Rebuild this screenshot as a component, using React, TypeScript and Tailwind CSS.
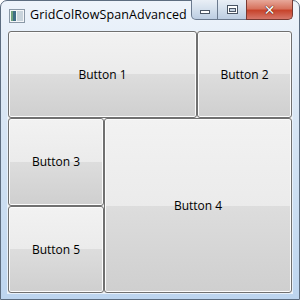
import React from "react";

const btn =
  "flex items-center justify-center rounded-[3px] border border-[#707070] text-[12px] text-black bg-[linear-gradient(to_bottom,#f2f2f2_0%,#ebebeb_50%,#dddddd_50%,#cfcfcf_100%)] shadow-[inset_0_0_0_1px_#fcfcfc]";

export default function App() {
  return (
    <div
      className="w-[300px] h-[300px] bg-white"
      style={{ fontFamily: '"Segoe UI", "Open Sans", "Noto Sans", sans-serif' }}
    >
      <div className="w-[300px] h-[300px] flex flex-col rounded-t-[7px] border border-[#5d6d80] bg-[linear-gradient(to_bottom,#eef4fb_0%,#dce8f5_30%,#bdd5ef_100%)] relative">
        <div className="h-[29px] flex items-start pl-[8px] pt-[6px] shrink-0">
          <svg width="16" height="14" viewBox="0 0 16 14" className="mt-[2px]">
            <rect x="0.5" y="0.5" width="15" height="13" fill="#f4f6f8" stroke="#8a98a6" />
            <rect x="2" y="2" width="5" height="10" fill="#3f6e86" />
            <rect x="8" y="2" width="6" height="10" fill="#c9d4dc" />
            <rect x="2" y="2" width="2" height="10" fill="#6fa27c" />
          </svg>
          <span className="ml-[5px] text-[12.5px] tracking-[0.1px] leading-[16px] text-black">GridColRowSpanAdvanced</span>
        </div>
        <div className="absolute top-[-1px] right-[6px] flex h-[20px]">
          <div className="w-[27px] h-[20px] flex items-center justify-center border border-[#6b7a8e] border-t-0 rounded-bl-[5px] bg-[linear-gradient(to_bottom,#e9eff6_0%,#d3dfec_50%,#bccde2_100%)]">
            <div className="w-[10px] h-[4px] bg-white border border-[#4a5564] mt-[4px]" />
          </div>
          <div className="w-[28px] h-[20px] flex items-center justify-center border-b border-[#6b7a8e] bg-[linear-gradient(to_bottom,#e9eff6_0%,#d3dfec_50%,#bccde2_100%)]">
            <div className="w-[11px] h-[9px] border border-[#4a5564] bg-white flex items-center justify-center">
              <div className="w-[7px] h-[4px] border border-[#4a5564] bg-[#c8d4e2]" />
            </div>
          </div>
          <div className="w-[47px] h-[20px] flex items-center justify-center border border-[#7a3a32] border-t-0 rounded-br-[5px] bg-[linear-gradient(to_bottom,#e7a89a_0%,#d7735e_45%,#c7442c_55%,#d6776a_100%)]">
            <span className="text-white font-bold text-[14px] leading-none" style={{ fontFamily: '"DejaVu Sans", sans-serif', textShadow: "0 0 1px #3a0a00, 0 0 1px #3a0a00" }}>✕</span>
          </div>
        </div>
        <div className="flex-1 px-[6px] pb-[6px]">
          <div className="border border-[#e8f1fb] w-[286px] h-[264px]">
            <div className="w-[284px] h-[262px] bg-[#f0f0f0] grid grid-cols-[189px_95px] grid-rows-[87px_88px_87px]">
              <div className={btn}>Button 1</div>
              <div className={btn}>Button 2</div>
              <div className="col-span-2 row-span-2 grid grid-cols-[96px_188px] grid-rows-[88px_87px]">
                <div className={btn}>Button 3</div>
                <div className={btn + " row-span-2"}>Button 4</div>
                <div className={btn}>Button 5</div>
              </div>
            </div>
          </div>
        </div>
      </div>
    </div>
  );
}
